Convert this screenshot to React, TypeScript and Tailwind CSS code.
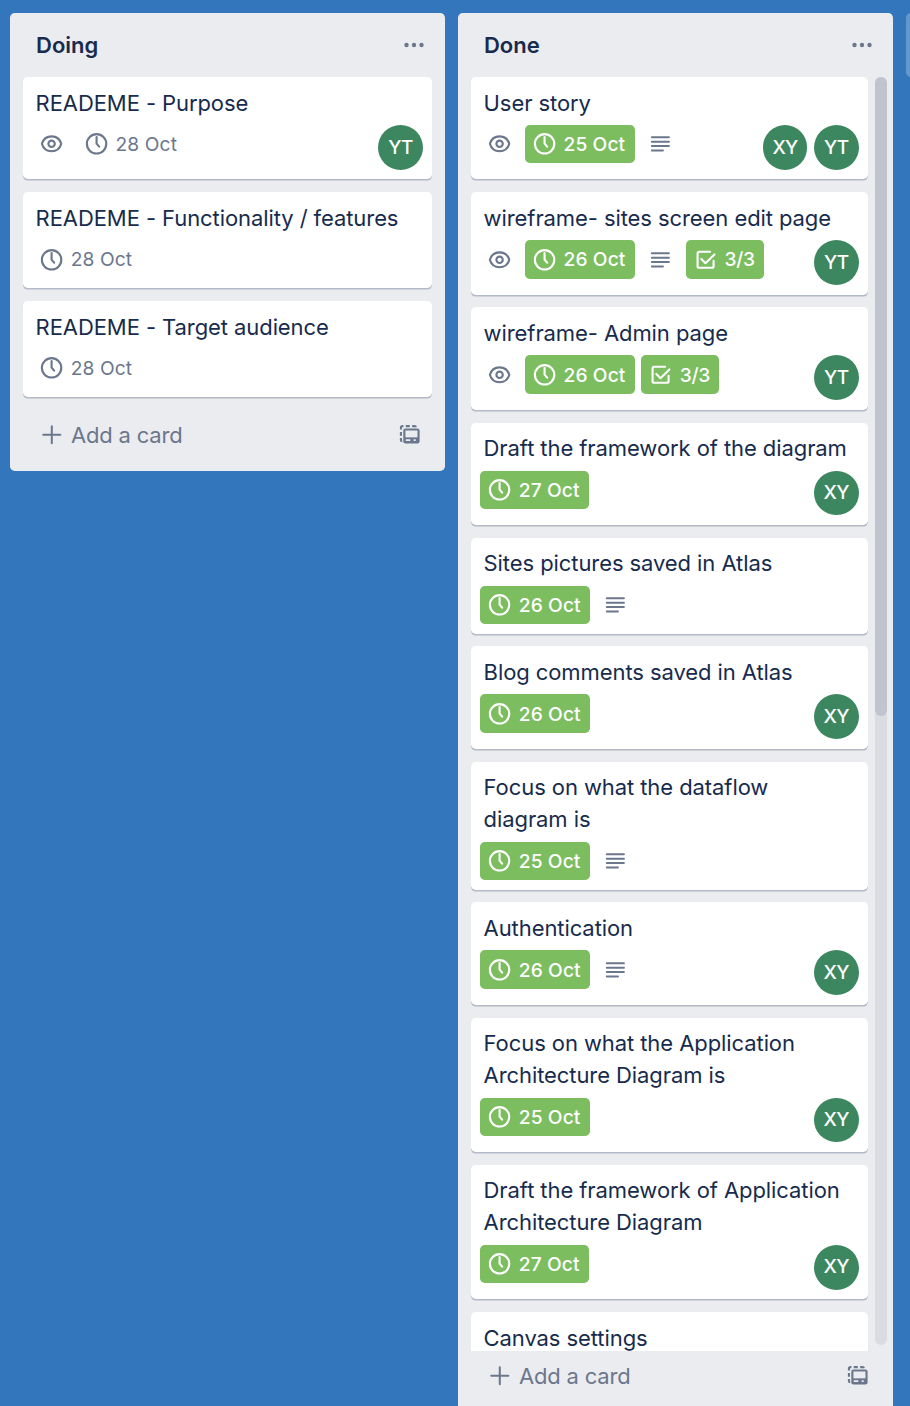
import type { ReactNode } from "react";

type CardData = {
  title: string;
  watch?: boolean;
  due?: string;
  done?: boolean;
  description?: boolean;
  checklist?: string;
  members?: string[];
};

const doing: CardData[] = [
  { title: "READEME - Purpose", watch: true, due: "28 Oct", members: ["YT"] },
  { title: "READEME - Functionality / features", due: "28 Oct" },
  { title: "READEME - Target audience", due: "28 Oct" },
];

const done: CardData[] = [
  { title: "User story", watch: true, due: "25 Oct", done: true, description: true, members: ["XY", "YT"] },
  { title: "wireframe- sites screen edit page", watch: true, due: "26 Oct", done: true, description: true, checklist: "3/3", members: ["YT"] },
  { title: "wireframe- Admin page", watch: true, due: "26 Oct", done: true, checklist: "3/3", members: ["YT"] },
  { title: "Draft the framework of the diagram", due: "27 Oct", done: true, members: ["XY"] },
  { title: "Sites pictures saved in Atlas", due: "26 Oct", done: true, description: true },
  { title: "Blog comments saved in Atlas", due: "26 Oct", done: true, members: ["XY"] },
  { title: "Focus on what the dataflow diagram is", due: "25 Oct", done: true, description: true },
  { title: "Authentication", due: "26 Oct", done: true, description: true, members: ["XY"] },
  { title: "Focus on what the Application Architecture Diagram is", due: "25 Oct", done: true, members: ["XY"] },
  { title: "Draft the framework of Application Architecture Diagram", due: "27 Oct", done: true, members: ["XY"] },
  { title: "Canvas settings" },
];

function Icon({ children }: { children: ReactNode }) {
  return (
    <svg
      viewBox="0 0 24 24"
      className="block h-[25.6px] w-[25.6px] shrink-0"
      fill="none"
      stroke="currentColor"
      strokeWidth="2"
      strokeLinecap="round"
      strokeLinejoin="round"
    >
      {children}
    </svg>
  );
}

const ClockIcon = () => (
  <Icon>
    <circle cx="11.8" cy="12" r="9.1" />
    <path d="M11.8 5.6v6.2l2.4 2.8" />
  </Icon>
);

const EyeIcon = () => (
  <Icon>
    <path d="M2.7 12C4.1 7.2 7.6 5 11.8 5S19.5 7.2 20.9 12C19.5 16.8 16 19 11.8 19S4.1 16.8 2.7 12Z" />
    <circle cx="11.8" cy="12" r="3" />
  </Icon>
);

const DescriptionIcon = () => (
  <Icon>
    <path strokeWidth="1.9" d="M3.6 5.8h16M3.6 10h16M3.6 14.1h16M3.6 18.2h10.4" />
  </Icon>
);

const CheckIcon = () => (
  <Icon>
    <path d="M16 4.5H5.8A1.5 1.5 0 0 0 4.3 6v12a1.5 1.5 0 0 0 1.5 1.5h12a1.5 1.5 0 0 0 1.5-1.5v-5" />
    <path d="M7.8 11.2l3.9 4L20.1 7" />
  </Icon>
);

const PlusIcon = () => (
  <Icon>
    <path strokeWidth="1.9" d="M12 4v16M4 12h16" />
  </Icon>
);

const TemplateIcon = () => (
  <Icon>
    <path d="M3.7 7V5.2A1.3 1.3 0 0 1 5 3.9h1M8.2 3.9h3.8M14.2 3.9h2.3A1.2 1.2 0 0 1 17.7 4.9M3.7 9.4v3.4M3.7 15.1v1.8a1.2 1.2 0 0 0 1.2 1.2" strokeLinecap="butt" />
    <rect x="6.9" y="7" width="13.3" height="12.2" rx="1" />
    <path d="M6.5 14.4h14.1v5H6.5z" fill="currentColor" stroke="none" />
    <path d="M8.2 16.9h4.3M15.6 16.9h1.9" stroke="#ebecf0" strokeWidth="1.6" strokeLinecap="butt" />
  </Icon>
);

function Badge({ icon, text, green }: { icon: ReactNode; text?: string; green?: boolean }) {
  return (
    <div
      className={
        "flex h-[38.4px] items-center rounded-[4.8px] p-[3.2px] " +
        (green ? "bg-[#7bbd5f] font-medium text-white" : "text-[#6b778c]")
      }
    >
      <span className="flex h-8 w-8 items-center justify-center">{icon}</span>
      {text && (
        <span
          className={
            "whitespace-nowrap text-[19.2px] leading-8 " +
            (text.includes("/") ? "pl-[3px] pr-[5.6px] tracking-[-0.2px]" : "pl-[3.2px] pr-[6.4px] tracking-[0.1px]")
          }
        >
          {text}
        </span>
      )}
    </div>
  );
}

function Card({ card }: { card: CardData }) {
  return (
    <article className="flex shrink-0 flex-col rounded-[4.8px] bg-white px-[9.6px] pt-[9.6px] shadow-[0_1.6px_0_#b3b9c7]">
      <h3 className="px-[3.2px] text-[22px] font-normal leading-8 tracking-[-0.08px] text-[#172b4d]">{card.title}</h3>
      <div className="mt-[6.4px] flex items-start justify-between">
        <div className="flex gap-[6.4px] pb-[9.6px]">
          {card.watch && <Badge icon={<EyeIcon />} />}
          {card.due && <Badge icon={<ClockIcon />} text={card.due} green={card.done} />}
          {card.description && <Badge icon={<DescriptionIcon />} />}
          {card.checklist && <Badge icon={<CheckIcon />} text={card.checklist} green />}
        </div>
        {card.members && (
          <div className="flex gap-[6.4px] pb-[9.6px]">
            {card.members.map((m) => (
              <span
                key={m}
                className="flex h-[44.8px] w-[44.8px] items-center justify-center rounded-full bg-[#3c875f] pt-px text-[19px] font-medium tracking-[-0.7px] text-white"
              >
                {m}
              </span>
            ))}
          </div>
        )}
      </div>
    </article>
  );
}

function Header({ title }: { title: string }) {
  return (
    <header className="flex h-16 shrink-0 items-center justify-between pl-[26px] pr-[21.5px]">
      <h2 className="text-[22px] font-semibold text-[#172b4d]">{title}</h2>
      <svg viewBox="0 0 20 6" className="h-[6px] w-5" fill="#6b778c">
        <circle cx="2.5" cy="3" r="2.2" />
        <circle cx="10" cy="3" r="2.2" />
        <circle cx="17.5" cy="3" r="2.2" />
      </svg>
    </header>
  );
}

function Footer() {
  return (
    <footer className="flex h-[49px] shrink-0 items-center justify-between pl-[29px] pr-[22.6px] text-[#6b778c]">
      <button className="flex items-center gap-[6.4px] text-[22px] leading-8 tracking-[-0.18px]">
        <PlusIcon />
        Add a card
      </button>
      <TemplateIcon />
    </footer>
  );
}

export default function App() {
  return (
    <div className="flex h-[1406px] w-[910px] items-start gap-[12.8px] overflow-hidden bg-[#3376bb] pl-[10px] pt-[13px] font-['Inter',sans-serif] antialiased">
      <section className="flex h-[458px] w-[435.2px] shrink-0 flex-col rounded-[4.8px] bg-[#ebecf0]">
        <Header title="Doing" />
        <div className="flex h-[333px] flex-col gap-[12.8px] px-[12.8px]">
          {doing.map((c) => (
            <Card key={c.title} card={c} />
          ))}
        </div>
        <Footer />
      </section>

      <section className="flex h-[1450px] w-[435.2px] shrink-0 flex-col rounded-[4.8px] bg-[#ebecf0]">
        <Header title="Done" />
        <div className="flex h-[1274px] shrink-0 pl-[12.8px] pr-[6.4px]">
          <div className="flex w-[397.4px] flex-col gap-[12.8px] overflow-hidden">
            {done.map((c) => (
              <Card key={c.title} card={c} />
            ))}
          </div>
          <div className="ml-auto h-[1268px] w-3 rounded-full bg-[#dadce2]">
            <div className="h-[639px] rounded-full bg-[#c0c4cf]" />
          </div>
        </div>
        <Footer />
      </section>

      <section className="h-16 w-[435.2px] shrink-0 rounded-[4.8px] bg-[#6498cd]" />
    </div>
  );
}
